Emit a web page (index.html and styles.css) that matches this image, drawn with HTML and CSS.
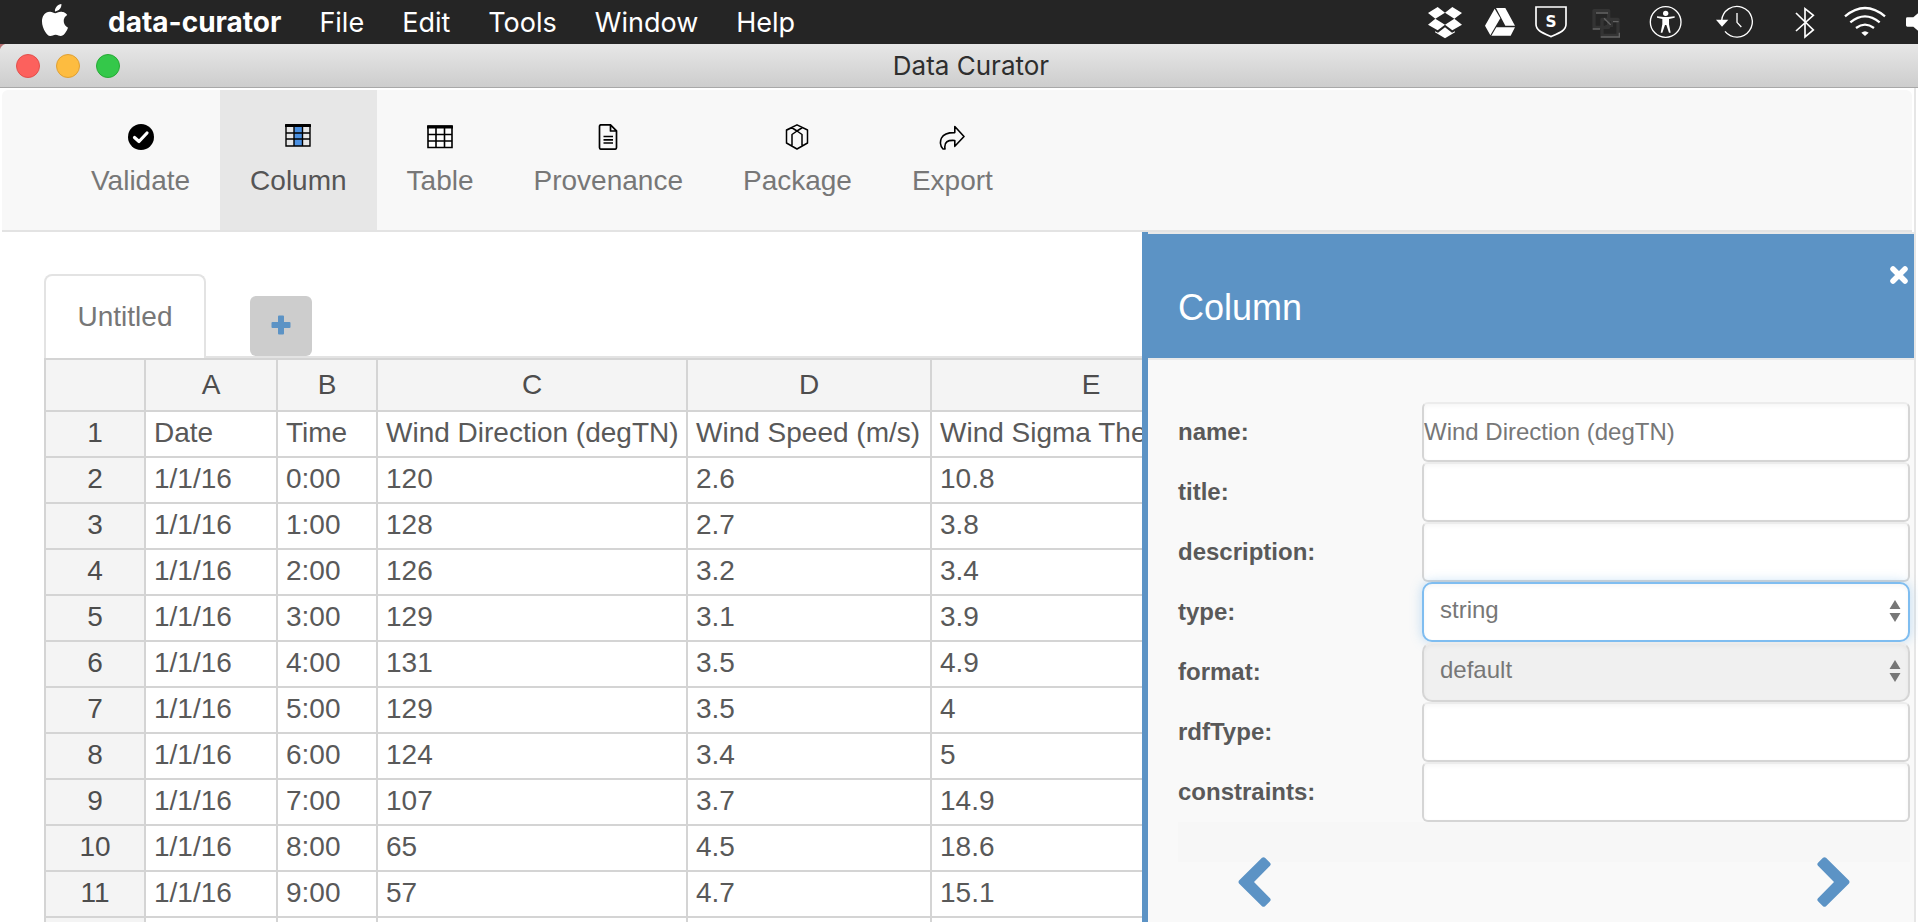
FILE: index.html
```html
<!DOCTYPE html>
<html lang="en">
<head>
<meta charset="utf-8">
<title>Data Curator</title>
<link rel="stylesheet" href="styles.css">
</head>
<body>
<header class="menubar">
  <svg class="apple" viewBox="0 0 24 24" aria-hidden="true"><path d="M12.152 6.896c-.948 0-2.415-1.078-3.96-1.04-2.04.027-3.91 1.183-4.961 3.014-2.117 3.675-.546 9.103 1.519 12.09 1.013 1.454 2.208 3.09 3.792 3.039 1.52-.065 2.09-.987 3.935-.987 1.831 0 2.35.987 3.96.948 1.637-.026 2.676-1.48 3.676-2.948 1.156-1.688 1.636-3.325 1.662-3.415-.039-.013-3.182-1.221-3.22-4.857-.026-3.04 2.48-4.494 2.597-4.559-1.429-2.09-3.623-2.324-4.39-2.376-2-.156-3.675 1.09-4.61 1.09zM15.53 3.83c.843-1.012 1.4-2.427 1.245-3.83-1.207.052-2.662.805-3.532 1.818-.78.896-1.454 2.338-1.273 3.714 1.338.104 2.715-.688 3.559-1.701"/></svg>
  <nav class="menus">
    <button class="menu menu-app" type="button">data-curator</button>
    <button class="menu" type="button">File</button>
    <button class="menu" type="button">Edit</button>
    <button class="menu" type="button">Tools</button>
    <button class="menu" type="button">Window</button>
    <button class="menu" type="button">Help</button>
  </nav>
  <div class="status" aria-hidden="true">
    <svg width="54" height="44" viewBox="60 0 162 132"><path d="M84 39l29-18 22 17-29 18zM135 38l22-17 29 18-23 17zM84 74l22-18 29 18-22 17zM135 74l28-18 23 18-29 17zM105 94l9 4 21-16 21 16 9-4v3l-30 18-30-18z"/></svg>
    <svg width="51" height="44" viewBox="222 0 153 132"><path d="M284 26l-29 51 16 29 30-51zM288 24h28l29 53h-29zM289 82h56l-13 25h-58z"/></svg>
    <svg width="55" height="44" viewBox="375 0 165 132"><path class="line" stroke-width="5" d="M408 21h90v52c0 18-18 25-45 37-27-12-45-19-45-37z"/><text class="shield-letter" x="453" y="82" text-anchor="middle">S</text></svg>
    <svg width="56" height="44" viewBox="540 0 168 132"><g fill="none"><path stroke="#343434" stroke-width="10" stroke-linejoin="round" d="M582 32h44v50h-44zM606 58h48v48h-48z"/><path stroke="#646464" stroke-width="4" d="M588 39h36M578 87h22M636 65h20M602 111h56V98"/><path stroke="#646464" stroke-width="4" d="M612 55l23 22"/><path stroke="#343434" stroke-width="6" d="M636 58v20h-20"/></g></svg>
    <svg width="60" height="44" viewBox="708 0 180 132"><circle class="line" cx="797" cy="66" r="46" stroke-width="4"/><circle cx="797" cy="40" r="8"/><path d="M771 49l20 2h13l20-2v4l-17 4v16l5 25h-5l-8-23h-4l-8 23h-5l5-25V57l-16-4z"/></svg>
    <svg width="79" height="44" viewBox="888 0 237 132"><path class="line" stroke-width="4" d="M965 62a46 46 0 1 1 10 32M1011 39v28l13 14"/><path d="M948 59h37l-19 21z"/></svg>
    <svg width="55" height="44" viewBox="1125 0 165 132"><path class="line" stroke-width="5" d="M1188 39l52 51-25 21V26l25 20-52 47"/></svg>
    <svg width="66" height="44" viewBox="1290 0 198 132"><path class="line" stroke-width="7" d="M1335 49q60-50 120 0M1351 67q44-36 88 0M1368 84q27-20 54 0"/><path d="M1384 98q11-9 22 0l-11 10z"/></svg>
    <svg width="22" height="44" viewBox="1488 0 66 132"><path d="M1522 52h18l14-12v52l-14-12h-18q-4 0-4-4V56q0-4 4-4z"/></svg>
  </div>
</header>

<div class="titlebar">
  <div class="lights">
    <button class="light light-close" type="button" aria-label="Close window"></button>
    <button class="light light-min" type="button" aria-label="Minimise window"></button>
    <button class="light light-zoom" type="button" aria-label="Zoom window"></button>
  </div>
  <h1 class="window-title">Data Curator</h1>
</div>

<div class="window">
  <nav class="toolbar">
    <button class="tool" type="button">
      <svg width="26" height="26" viewBox="0 0 26 26"><circle cx="13" cy="13" r="13"/><path d="M6.500 13.500l4.500 4 8-8.500" fill="none" stroke="#fff" stroke-width="3.200" stroke-linecap="round" stroke-linejoin="round"/></svg>
      Validate</button>
    <button class="tool tool-active" type="button">
      <svg width="26" height="26" viewBox="0 0 26 26"><path d="M9 3h8v19H9z" fill="#4a90e2"/><path class="ink" stroke-width="1.400" d="M1 1h24v21H1zM1 9h24M1 15h24M9 2v20M17.500 2v20"/><path d="M0 1q0-1 1-1h24q1 0 1 1v2H0z"/></svg>
      Column</button>
    <button class="tool" type="button">
      <svg width="26" height="26" viewBox="0 0 26 26"><path d="M1 3h24v20H1z" fill="#fff"/><path class="ink" stroke-width="1.600" d="M1 2h24v21.500H1zM1 10.500h24M1 17h24M9 3v20M17.500 3v20"/><path d="M0 2.500q0-1 1-1h24q1 0 1 1v2H0z"/></svg>
      Table</button>
    <button class="tool" type="button">
      <svg width="26" height="26" viewBox="0 0 26 26"><path class="ink" stroke-width="1.700" stroke-linejoin="round" d="M6 .8h9.500l6 6V23.500q0 1.700-1.700 1.700H6.200q-1.700 0-1.700-1.700V2.500Q4.500.8 6 .8zM15.500 1v6h6M8.500 12.500h9.500M8.500 15.800h9.500M8.500 19h9.500"/></svg>
      Provenance</button>
    <button class="tool" type="button">
      <svg width="26" height="26" viewBox="0 0 26 26"><path class="ink" stroke-width="1.500" stroke-linejoin="round" d="M13 .8L23.500 6v13L13 25 2.500 19V6zM7.500 3.500L13 7l5.500-3.500M8 22V10.500L13 7l5 3.500V22M2.500 6.300L8 3.500M13 7L8 3.600"/></svg>
      Package</button>
    <button class="tool" type="button">
      <svg width="26" height="26" viewBox="0 0 26 26"><path class="ink" stroke-width="1.600" stroke-linejoin="round" d="M15.800 2.500l9.200 10-9.200 9.800V16.500C9 16 4.800 17.500 6 25H4C.8 22 1 17 2.500 14 4.800 9.500 10 8.500 15.800 8.600z"/></svg>
      Export</button>
  </nav>

  <div class="workspace">
    <main class="sheet">
      <div class="tabs">
        <button class="tab" type="button">Untitled</button>
        <button class="tab-add" type="button" aria-label="Add tab"><svg width="20" height="20" viewBox="0 0 20 20"><path d="M8 .5h4q1 0 1 1V7h5.500q1 0 1 1v4q0 1-1 1H13v5.500q0 1-1 1H8q-1 0-1-1V13H1.500q-1 0-1-1V8q0-1 1-1H7V1.500q0-1 1-1z"/></svg></button>
      </div>
      <table class="grid">
        <colgroup><col class="col-index"><col class="col-date"><col class="col-time"><col class="col-direction"><col class="col-speed"><col class="col-sigma"></colgroup>
        <thead><tr><th></th><th>A</th><th>B</th><th>C</th><th>D</th><th>E</th></tr></thead>
        <tbody>
          <tr><th>1</th><td>Date</td><td>Time</td><td>Wind Direction (degTN)</td><td>Wind Speed (m/s)</td><td>Wind Sigma The</td></tr>
          <tr><th>2</th><td>1/1/16</td><td>0:00</td><td>120</td><td>2.6</td><td>10.8</td></tr>
          <tr><th>3</th><td>1/1/16</td><td>1:00</td><td>128</td><td>2.7</td><td>3.8</td></tr>
          <tr><th>4</th><td>1/1/16</td><td>2:00</td><td>126</td><td>3.2</td><td>3.4</td></tr>
          <tr><th>5</th><td>1/1/16</td><td>3:00</td><td>129</td><td>3.1</td><td>3.9</td></tr>
          <tr><th>6</th><td>1/1/16</td><td>4:00</td><td>131</td><td>3.5</td><td>4.9</td></tr>
          <tr><th>7</th><td>1/1/16</td><td>5:00</td><td>129</td><td>3.5</td><td>4</td></tr>
          <tr><th>8</th><td>1/1/16</td><td>6:00</td><td>124</td><td>3.4</td><td>5</td></tr>
          <tr><th>9</th><td>1/1/16</td><td>7:00</td><td>107</td><td>3.7</td><td>14.9</td></tr>
          <tr><th>10</th><td>1/1/16</td><td>8:00</td><td>65</td><td>4.5</td><td>18.6</td></tr>
          <tr><th>11</th><td>1/1/16</td><td>9:00</td><td>57</td><td>4.7</td><td>15.1</td></tr>
          <tr><th></th><td></td><td></td><td></td><td></td><td></td></tr>
        </tbody>
      </table>
    </main>

    <aside class="panel">
      <div class="panel-head">
        <h2 class="panel-title">Column</h2>
        <button class="panel-close" type="button" aria-label="Close panel"><svg width="20" height="20" viewBox="0 0 20 20"><path d="M4 4l12 12M16 4L4 16" fill="none" stroke="#fff" stroke-width="5.500" stroke-linecap="round"/></svg></button>
      </div>
      <form class="fields">
        <div class="field"><label for="name">name:</label><input class="control" id="name" type="text" value="Wind Direction (degTN)"></div>
        <div class="field"><label for="title">title:</label><input class="control" id="title" type="text"></div>
        <div class="field"><label for="description">description:</label><input class="control" id="description" type="text"></div>
        <div class="field"><label for="type">type:</label>
          <div class="picker"><select class="control choice choice-active" id="type"><option>string</option></select><svg class="updown" width="12" height="22" viewBox="0 0 12 22"><path d="M6 0l5.500 9H.5zM6 22L.5 13h11z"/></svg></div></div>
        <div class="field"><label for="format">format:</label>
          <div class="picker"><select class="control choice choice-off" id="format" disabled><option>default</option></select><svg class="updown" width="12" height="22" viewBox="0 0 12 22"><path d="M6 0l5.500 9H.5zM6 22L.5 13h11z"/></svg></div></div>
        <div class="field"><label for="rdftype">rdfType:</label><input class="control" id="rdftype" type="text"></div>
        <div class="field"><label for="constraints">constraints:</label><input class="control" id="constraints" type="text"></div>
        <div class="fields-end"></div>
      </form>
      <div class="pager">
        <button class="step" type="button" aria-label="Previous column"><svg width="34" height="50" viewBox="0 0 34 50"><path d="M24 .8q1.500-1.300 3 0l5 5q1.400 1.500 0 3L16 25l16 16.200q1.400 1.500 0 3l-5 5q-1.500 1.300-3 0L1 26.500q-1-1.500 0-3z"/></svg></button>
        <button class="step" type="button" aria-label="Next column"><svg width="34" height="50" viewBox="0 0 34 50"><path d="M10 .8q-1.500-1.300-3 0l-5 5q-1.400 1.500 0 3L18 25 2 41.200q-1.400 1.500 0 3l5 5q1.500 1.300 3 0L33 26.500q1-1.500 0-3z"/></svg></button>
      </div>
    </aside>
  </div>
</div>
</body>
</html>
```

FILE: styles.css
```css
* { box-sizing: border-box; }

body {
  margin: 0;
  height: 100vh;
  display: flex;
  flex-direction: column;
  overflow: hidden;
  background: #fff;
  color: #595959;
  font-family: "Liberation Sans", Arial, sans-serif;
  font-size: 28px;
}

button {
  margin: 0;
  padding: 0;
  border: 0;
  background: none;
  color: inherit;
  font: inherit;
}

svg { display: block; flex: none; }

/* System menu bar */
.menubar {
  flex: none;
  display: flex;
  align-items: center;
  height: 44px;
  padding-left: 39px;
  background: #252525;
  color: #fff;
  font-family: Inter, Roboto, sans-serif;
  font-size: 27px;
}
.apple { width: 32px; height: 32px; margin-bottom: 4px; fill: #fff; }
.menus { display: flex; align-items: baseline; gap: 38px; margin-left: 37px; }
.menu { line-height: 44px; }
.menu-app { font-size: 28px; font-weight: 700; }
.status { display: flex; margin-left: auto; fill: #fff; }
.line { fill: none; stroke: #fff; }
.shield-letter { font: 700 46px "DejaVu Sans", sans-serif; }

/* Window title bar, running on past the right edge of the screen */
.titlebar {
  flex: none;
  display: grid;
  grid-template-columns: 1fr auto 1fr;
  align-items: center;
  height: 44px;
  margin-right: -24px;
  padding: 0 16px;
  border-bottom: 1px solid #a8a8a8;
  background: radial-gradient(circle at 8px 8px, transparent 8px, #b56f70 9px) 0 0 / 8px 8px no-repeat, linear-gradient(#e7e7e7, #cdcdcd);
}
.lights { display: flex; gap: 16px; }
.light { width: 24px; height: 24px; border: 1px solid; border-radius: 50%; }
.light-close { background: #fc615d; border-color: #e2504c; }
.light-min { background: #fdbc40; border-color: #dfa035; }
.light-zoom { background: #34c84a; border-color: #27aa35; }
.window-title {
  margin: 0;
  color: #2e2e2e;
  font: 400 26px/44px Inter, Roboto, sans-serif;
}

/* Application window */
.window {
  flex: 1;
  min-height: 0;
  display: flex;
  flex-direction: column;
  margin-right: 2px;
  padding-top: 2px;
  border-right: 2px solid #e6e6e6;
}
.toolbar {
  flex: none;
  display: flex;
  height: 142px;
  margin: 0 2px;
  padding-left: 59px;
  border-bottom: 2px solid #e3e3e3;
  border-radius: 6px 6px 0 0;
  background: #f8f8f8;
}
.tool {
  display: flex;
  flex-direction: column;
  align-items: center;
  gap: 15px;
  padding: 34px 30px 0;
  color: #777;
  line-height: 32px;
}
.tool-active { background: #e7e7e7; color: #555; }
.ink { fill: none; stroke: #000; }

.workspace { flex: 1; min-height: 0; display: flex; }
.sheet {
  flex: 1;
  min-width: 0;
  overflow: hidden;
  padding: 42px 0 0 44px;
}

/* Sheet tabs */
.tabs {
  display: flex;
  align-items: flex-end;
  gap: 44px;
  height: 84px;
  box-shadow: inset 0 -2px #e3e3e3;
}
.tab {
  width: 162px;
  height: 84px;
  border: 2px solid #e3e3e3;
  border-bottom: 0;
  border-radius: 8px 8px 0 0;
  background: #fff;
  color: #777;
}
.tab-add {
  display: grid;
  place-items: center;
  width: 62px;
  height: 60px;
  margin-bottom: 2px;
  padding-bottom: 2px;
  border-radius: 6px;
  background: #cdcdcd;
  fill: #5c93c5;
}

/* Data grid */
.grid {
  width: 1208px;
  table-layout: fixed;
  border-collapse: separate;
  border-spacing: 0;
  border: 2px solid #d4d4d4;
  border-width: 2px 0 0 2px;
}
.col-index, .col-time { width: 100px; }
.col-date { width: 132px; }
.col-direction { width: 310px; }
.col-speed { width: 244px; }
.col-sigma { width: 320px; }
.grid th, .grid td {
  height: 46px;
  padding: 0 8px;
  overflow: hidden;
  border: 2px solid #d4d4d4;
  border-width: 0 2px 2px 0;
  font-weight: 400;
  line-height: 42px;
  text-align: left;
  vertical-align: top;
  white-space: nowrap;
}
.grid th { background: #f4f4f4; color: #4d4d4d; text-align: center; }
.grid thead th { height: 52px; line-height: 50px; }

/* Column properties panel */
.panel {
  flex: 0 1 772px;
  display: flex;
  flex-direction: column;
  border-left: 6px solid #5c93c5;
  background: #f9f9f9;
}
.panel-head {
  display: flex;
  align-items: flex-start;
  justify-content: space-between;
  height: 128px;
  padding: 31px 5px 0 30px;
  border-top: 2px solid #e9e9e9;
  border-bottom: 2px solid #e9e9e9;
  background: #5c93c5;
}
.panel-title {
  margin: 0;
  color: #fff;
  font-size: 36px;
  font-weight: 400;
  line-height: 86px;
}
.fields { padding: 42px 4px 0 30px; }
.field {
  display: grid;
  grid-template-columns: 1fr 2fr;
  align-items: center;
  height: 60px;
  font-size: 24px;
}
.field label { font-weight: 700; }
.control {
  display: block;
  width: 100%;
  height: 60px;
  margin: 0;
  padding: 0;
  border: 2px solid #d5d5d5;
  border-top-color: #ececec;
  border-radius: 6px;
  outline: 0;
  background: #fff;
  box-shadow: inset 0 2px 4px #0000000a;
  color: #777;
  font: inherit;
}
.picker { position: relative; }
.choice {
  appearance: none;
  padding: 0 16px 6px;
  border-radius: 10px;
  opacity: 1;
}
.choice-active {
  border-color: #7fbdf0;
  box-shadow: inset 0 2px 4px #0000000a, 0 0 12px #66afe966;
}
.choice-off { background: #f0f0f0; }
.updown {
  position: absolute;
  top: 18px;
  right: 9px;
  fill: #777;
  pointer-events: none;
}
.fields-end { height: 40px; background: #f7f7f7; }
.pager {
  display: flex;
  justify-content: space-between;
  margin-top: -5px;
  padding: 0 64px 0 90px;
}
.step { fill: #5c93c5; }
```
